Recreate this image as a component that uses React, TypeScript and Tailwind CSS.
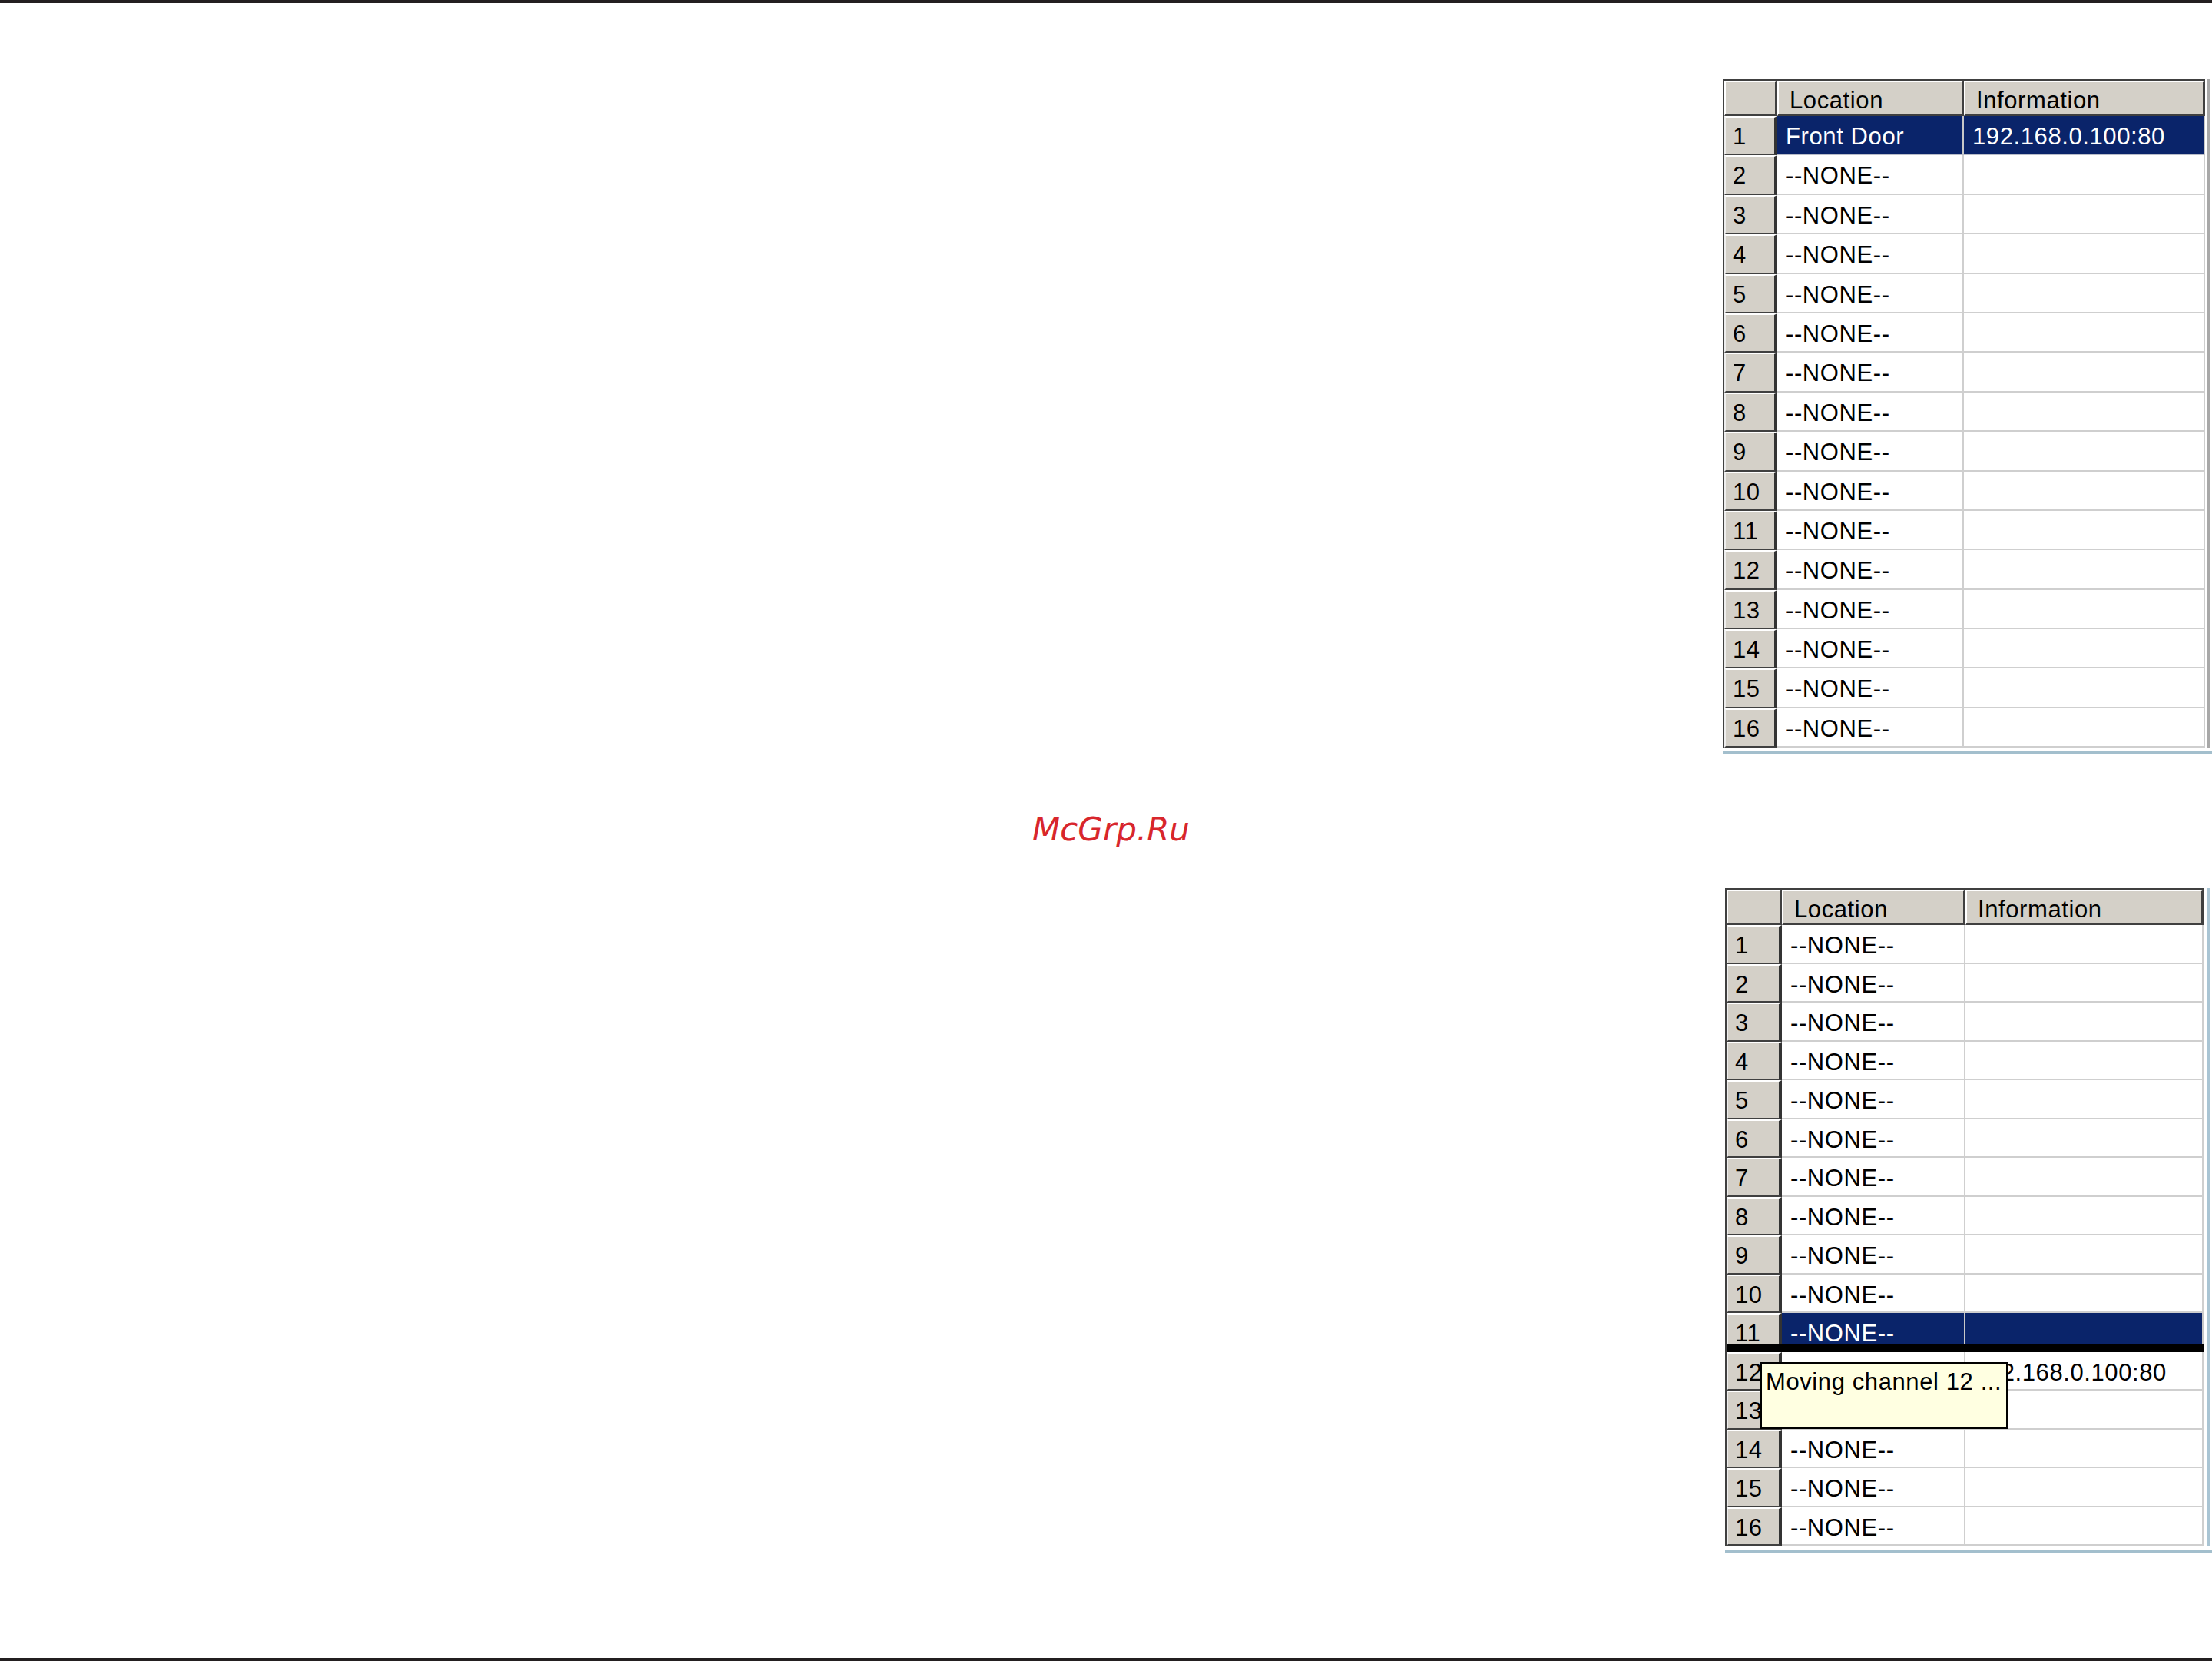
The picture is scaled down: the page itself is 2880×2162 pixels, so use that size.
import React from 'react';

type Row = { loc: string; info: string; selected?: boolean };

// shared text look for the grid (old Windows list control)
const txt = "font-['Liberation_Sans',Arial,sans-serif] text-[31px] leading-[30px] tracking-[0.6px] whitespace-nowrap text-black";
const headCell = "bg-[#d4d0c8] border-t-2 border-l-2 border-t-white border-l-white border-b-[3px] border-r-[3px] border-b-[#404040] border-r-[#404040] pt-[9px]";
const numCell = "bg-[#d4d0c8] border-t-2 border-l-2 border-t-white border-l-[#eeeeee] border-b-2 border-b-[#404040] border-r-4 border-r-[#333333] pt-[10px] pl-[9px]";
const dataCell = "bg-white border-b-2 border-r-2 border-[#cfcfcf] pt-[12px] pl-[11px]";
const selCell = "bg-[#0a246a] text-white border-b-2 border-r-2 border-b-[#b8bcc8] border-r-[#c8c8c8] pt-[12px] pl-[11px]";

const none = (n: number): Row[] => Array.from({ length: n }, () => ({ loc: '--NONE--', info: '' }));

const rowsTop: Row[] = [
  { loc: 'Front Door', info: '192.168.0.100:80', selected: true },
  ...none(15),
];

const rowsBottom: Row[] = [
  ...none(10),
  { loc: '--NONE--', info: '', selected: true },
  { loc: 'Front Door', info: '192.168.0.100:80' },
  ...none(4),
];

function ChannelTable({
  rows,
  wrap,
  grid,
  rowH,
  strip,
  children,
}: {
  rows: Row[];
  wrap: string;
  grid: string;
  rowH: string;
  strip: React.ReactNode;
  children?: React.ReactNode;
}) {
  return (
    <div className={`${wrap} flex flex-col shrink-0`}>
      <div className="flex">
        <div className={`relative grid ${grid} border-l-2 border-t-2 border-[#404040] ${txt}`}>
          <div className={`h-[46px] ${headCell}`} />
          <div className={`h-[46px] ${headCell} pl-[14px]`}>Location</div>
          <div className={`h-[46px] ${headCell} pl-[14px]`}>Information</div>
          {rows.map((r, i) => (
            <React.Fragment key={i}>
              <div className={`${rowH} ${numCell}`}>{i + 1}</div>
              <div className={`${rowH} ${r.selected ? selCell : dataCell}`}>{r.loc}</div>
              <div className={`${rowH} ${r.selected ? selCell : dataCell} pl-[8px]`}>{r.info}</div>
            </React.Fragment>
          ))}
          {children}
        </div>
        {strip}
      </div>
      <div className="mt-[5px] h-[4px] bg-[#a3bfcd]" />
    </div>
  );
}

export default function App() {
  return (
    <div className="w-[2880px] h-[2162px] bg-white flex flex-col overflow-hidden">
      <div className="h-[4px] bg-[#231f20] shrink-0" />

      <ChannelTable
        rows={rowsTop}
        wrap="mt-[99px] ml-[2243px]"
        grid="grid-cols-[69px_243px_314px]"
        rowH="h-[51.4px]"
        strip={
          <div className="w-[9px] flex">
            <div className="ml-[3px] w-[3px] bg-[#a8a8a8]" />
          </div>
        }
      />

      <div className="mt-[77px] h-[42px] shrink-0 pl-[13px] text-center font-['DejaVu_Sans',sans-serif] italic text-[42px] leading-[42px] text-[#d8262c]">
        McGrp.Ru
      </div>

      <ChannelTable
        rows={rowsBottom}
        wrap="mt-[55px] ml-[2246px]"
        grid="grid-cols-[72px_239px_310px]"
        rowH="h-[50.5px]"
        strip={
          <div className="w-[11px] flex">
            <div className="ml-[4px] w-[4px] bg-[#a9c4d3]" />
          </div>
        }
      >
        {/* drop marker while dragging */}
        <div className="absolute left-0 top-[592px] w-[621px] h-[10px] bg-black" />
        {/* drag tooltip */}
        <div className="absolute left-[44px] top-[615px] w-[322px] h-[87px] bg-[#ffffe1] border-2 border-black pl-[5px] pt-[9px]">
          Moving channel 12 ...
        </div>
      </ChannelTable>

      <div className="flex-1" />
      <div className="h-[4px] bg-[#231f20] shrink-0" />
    </div>
  );
}
